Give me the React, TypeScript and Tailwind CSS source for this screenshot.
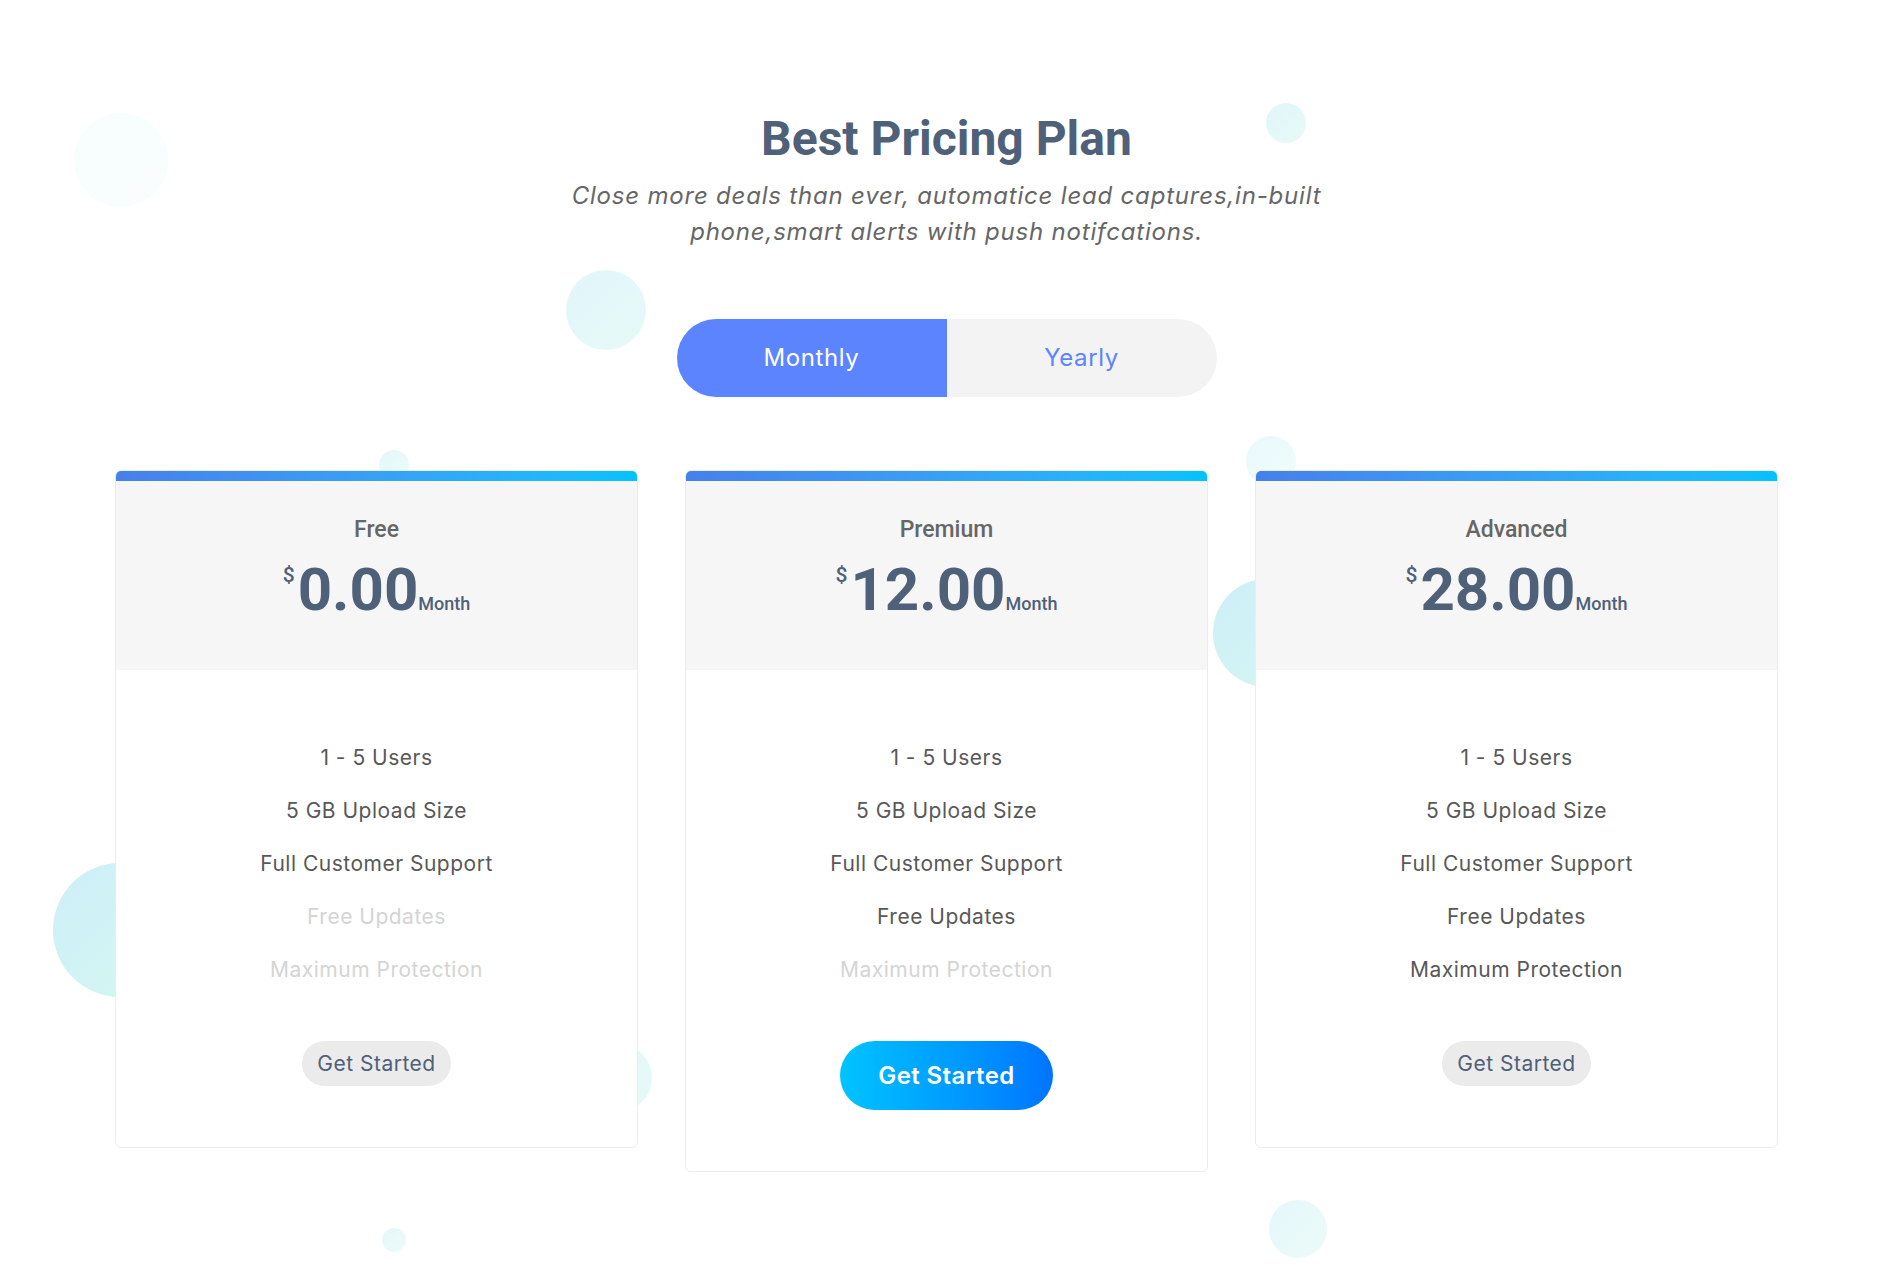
import React from 'react';

const featureNames = [
  '1 - 5 Users',
  '5 GB Upload Size',
  'Full Customer Support',
  'Free Updates',
  'Maximum Protection',
];

const plans = [
  { name: 'Free', price: '0.00', included: [true, true, true, false, false], featured: false },
  { name: 'Premium', price: '12.00', included: [true, true, true, true, false], featured: true },
  { name: 'Advanced', price: '28.00', included: [true, true, true, true, true], featured: false },
];

const bubble = 'absolute rounded-full bg-linear-to-br from-[#cdeef9] to-[#d5f8ef]';

const Bubbles = () => (
  <>
    <div className={`${bubble} left-[74px] top-[113px] w-[94px] h-[94px] opacity-15`} />
    <div className={`${bubble} left-[1266px] top-[103px] w-[40px] h-[40px] opacity-60`} />
    <div className={`${bubble} left-[566px] top-[270px] w-[80px] h-[80px] opacity-60`} />
    <div className={`${bubble} left-[379px] top-[450px] w-[30px] h-[30px] opacity-50`} />
    <div className={`${bubble} left-[1246px] top-[436px] w-[50px] h-[50px] opacity-40`} />
    <div className={`${bubble} left-[1213px] top-[579px] w-[108px] h-[108px]`} />
    <div className={`${bubble} left-[53px] top-[863px] w-[134px] h-[134px]`} />
    <div className={`${bubble} left-[584px] top-[1044px] w-[68px] h-[68px] opacity-60`} />
    <div className={`${bubble} left-[1269px] top-[1200px] w-[58px] h-[58px] opacity-50`} />
    <div className={`${bubble} left-[382px] top-[1228px] w-[24px] h-[24px] opacity-50`} />
  </>
);

type Plan = (typeof plans)[number];

const PlanCard = ({ plan }: { plan: Plan }) => (
  <div className="w-[523px] overflow-hidden rounded-md border border-[#ececec] bg-white">
    <div className="h-[10px] bg-linear-to-r from-[#4680ea] to-[#02c2fc]" />
    <div className="bg-[#f6f6f6] pt-[35px] pb-[50px] text-center font-['Roboto',sans-serif]">
      <h3 className="text-[23px] leading-[28px] font-medium text-[#666666]">{plan.name}</h3>
      <div className="mt-[16px] flex items-baseline justify-center text-[#4f6079]">
        <span className="mt-[5px] mr-[3px] self-start text-[21px] leading-[20px] font-medium">$</span>
        <span className="text-[60px] leading-[60px] font-bold">{plan.price}</span>
        <span className="text-[18px] font-medium">Month</span>
      </div>
    </div>
    <div className="flex flex-col items-center pt-[61px] pb-[61px] font-['Inter',sans-serif] tracking-[0.5px]">
      <ul className="text-center text-[21px] leading-[53px]">
        {featureNames.map((f, i) => (
          <li key={f} className={plan.included[i] ? 'text-[#585858]' : 'text-[#d4d4d4]'}>
            {f}
          </li>
        ))}
      </ul>
      {plan.featured ? (
        <button className="mt-[45px] flex h-[69px] w-[213px] items-center justify-center rounded-full bg-linear-to-r from-[#00c4ff] to-[#0074ff] text-[24px] font-semibold tracking-[0.4px] text-white">
          Get Started
        </button>
      ) : (
        <button className="mt-[45px] flex h-[45px] w-[149px] items-center justify-center rounded-full bg-[#ebebeb] text-[21px] text-[#4f6079]">
          Get Started
        </button>
      )}
    </div>
  </div>
);

export default function App() {
  return (
    <div className="relative min-h-[1280px] w-full overflow-hidden bg-white">
      <Bubbles />
      <div className="relative flex flex-col items-center pt-[110px]">
        <h2 className="font-['Roboto',sans-serif] text-[48px] leading-[58px] font-bold text-[#4f6079]">
          Best Pricing Plan
        </h2>
        <p className="mt-[10px] text-center font-['Inter',sans-serif] text-[24px] leading-[36px] tracking-[0.8px] italic text-[#666666]">
          Close more deals than ever, automatice lead captures,in-built
          <br />
          phone,smart alerts with push notifcations.
        </p>
        <div className="mt-[69px] flex h-[78px] w-[540px] overflow-hidden rounded-full font-['Inter',sans-serif] text-[24px] tracking-[0.6px]">
          <button className="flex flex-1 items-center justify-center bg-[#5b84fe] text-white">Monthly</button>
          <button className="flex flex-1 items-center justify-center bg-[#f3f3f3] text-[#5b84fe]">Yearly</button>
        </div>
        <div className="mt-[73px] flex items-start justify-center gap-[47px]">
          {plans.map((p) => (
            <PlanCard key={p.name} plan={p} />
          ))}
        </div>
      </div>
    </div>
  );
}
